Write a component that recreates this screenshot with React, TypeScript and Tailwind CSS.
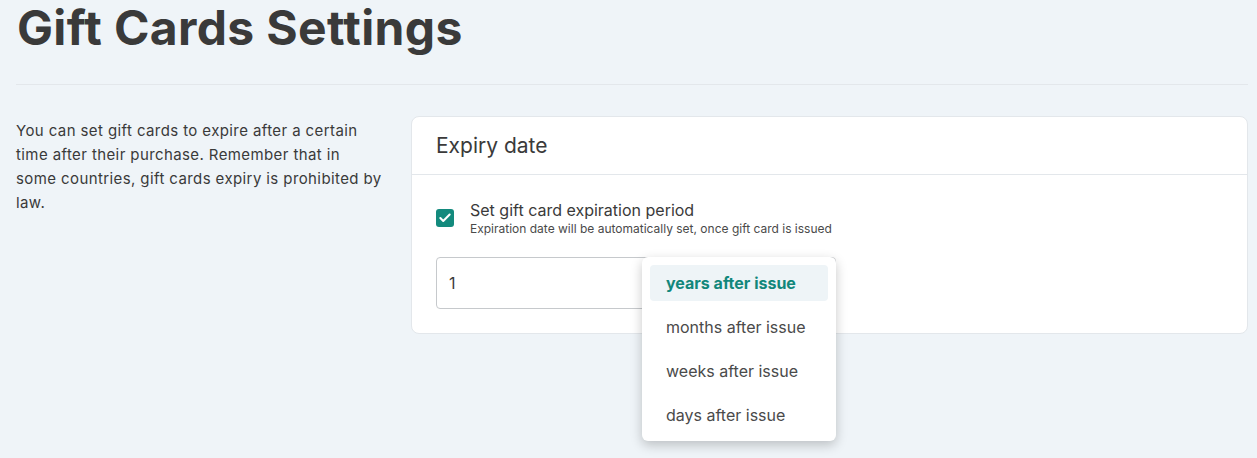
import { Check } from "lucide-react";

const options = ["years after issue", "months after issue", "weeks after issue", "days after issue"];

export default function App() {
  return (
    <main
      className="min-h-screen w-full bg-[#eff4f8] pl-4 pr-[9px] text-[#3a3a3a]"
      style={{ fontFamily: "Inter, 'Noto Sans', sans-serif" }}
    >
      <h1 className="pl-px text-[48px] font-bold leading-[56px] tracking-[0.35px] text-[#3a3a3a]">
        Gift Cards Settings
      </h1>
      <div className="mt-[28px] h-px bg-[#e3e7eb]" />

      <section className="mt-[31px] flex items-start gap-[26px]">
        {/* description */}
        <p className="w-[369px] shrink-0 pt-[3px] text-[15px] leading-6 tracking-[0.4px] text-[#3a3a3a]">
          You can set gift cards to expire after a certain time after their purchase. Remember that in some
          countries, gift cards expiry is prohibited by law.
        </p>

        {/* card */}
        <div className="flex-1 rounded-lg border border-[#e3e7eb] bg-white">
          <div className="flex h-[58px] items-center border-b border-[#e3e7eb] px-6">
            <h2 className="pt-px text-[21px] leading-7 text-[#3a3a3a]">Expiry date</h2>
          </div>
          <div className="px-6 pt-[24px] pb-6">
            <label className="flex items-start gap-4">
              <span className="mt-[10px] flex h-[18px] w-[18px] items-center justify-center rounded-[3px] bg-[#138a7d] text-white">
                <Check size={14} strokeWidth={3.5} />
              </span>
              <span className="flex flex-col">
                <span className="text-[16px] leading-[22px] text-[#3a3a3a]">Set gift card expiration period</span>
                <span className="text-[12px] leading-4 text-[#4a4a4a]">
                  Expiration date will be automatically set, once gift card is issued
                </span>
              </span>
            </label>

            <div className="relative mt-[20px] w-[400px]">
              <div className="flex h-[52px] items-center rounded border border-[#c6c9cc] px-3 text-[16px] text-[#3a3a3a]">
                1
              </div>
              <ul className="absolute left-[206px] top-0 z-10 flex w-[194px] flex-col gap-2 rounded-md bg-white p-2 shadow-[0_4px_12px_rgba(0,0,0,0.22)]">
                {options.map((o, i) => (
                  <li
                    key={o}
                    className={
                      i === 0
                        ? "flex h-9 items-center rounded bg-[#eef4f7] px-4 text-[16px] font-bold text-[#12877b]"
                        : "flex h-9 items-center rounded px-4 text-[16px] text-[#4a4a4a]"
                    }
                  >
                    {o}
                  </li>
                ))}
              </ul>
            </div>
          </div>
        </div>
      </section>
    </main>
  );
}
